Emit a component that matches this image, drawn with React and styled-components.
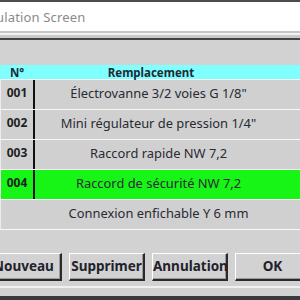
import React from "react";
import styled, { createGlobalStyle } from "styled-components";

const Global = createGlobalStyle`
  html, body { margin: 0; padding: 0; width: 300px; height: 300px; overflow: hidden; background: #d2d2d2; }
  * { box-sizing: border-box; }
`;

const Window = styled.div`
  width: 300px;
  height: 300px;
  display: flex;
  flex-direction: column;
  background: #d2d2d2;
  border-top: 2px solid #4c4c4c;
  border-bottom: 4px solid #3a3a3a;
  font-family: "Noto Sans", "Open Sans", sans-serif;
  overflow: hidden;
`;

const TitleBar = styled.div`
  height: 29px;
  flex: none;
  background: #ffffff;
  display: flex;
  align-items: center;
  white-space: nowrap;
`;

const Title = styled.span`
  margin-left: -27px;
  font-size: 13px;
  color: #8a8a8a;
  letter-spacing: 0.15px;
`;

const Frame = styled.div`
  flex: none;
  height: 9px;
  border-top: 2px solid #c6c6c6;
  border-bottom: 2px solid #444;
  background: linear-gradient(#f2f2f2 0 2px, #c9c9c9 2px);
`;

const Body = styled.div`
  flex: 1;
  display: flex;
  flex-direction: column;
  padding-top: 25px;
`;

const HeaderRow = styled.div`
  height: 15px;
  display: grid;
  grid-template-columns: 34px 1fr;
  background: #80ffff;
  border-bottom: 1px solid #f4f4f4;
  font-size: 11.5px;
  font-weight: 700;
  color: #1e2a36;
  align-items: center;
`;

const HeadCell = styled.div`
  text-align: center;
  padding-right: ${p => p.$pr || 0}px;
  line-height: 15px;
`;

const Row = styled.div`
  height: 30px;
  display: grid;
  grid-template-columns: 34px 1fr;
  background: ${p => (p.$active ? "#16f516" : "#d0d0d0")};
  border-bottom: 1px solid #f8f8f8;
  border-left: 1px solid #ececec;
  align-items: stretch;
`;

const NumCell = styled.div`
  display: flex;
  align-items: center;
  justify-content: center;
  font-size: 12px;
  font-weight: 700;
  color: #1f1f1f;
  border-right: ${p => (p.$line ? "2px solid #111" : "none")};
  padding-bottom: 5px;
`;

const TextCell = styled.div`
  display: flex;
  align-items: center;
  justify-content: center;
  padding-right: 18px;
  padding-bottom: 3px;
  font-size: 12.9px;
  color: #2a2a34;
  white-space: nowrap;
`;

const ButtonBar = styled.div`
  margin-top: 23px;
  display: flex;
  gap: 7px;
  margin-left: -14px;
`;

const Button = styled.button`
  flex: none;
  width: 76px;
  height: 28px;
  background: #d2d2d2;
  border: none;
  border-top: 1px solid #ffffff;
  border-left: 1px solid #ffffff;
  border-right: 2px solid #2a2a2a;
  border-bottom: 2px solid #2a2a2a;
  box-shadow: inset -1px -1px 0 #9a9a9a;
  font-family: "Noto Sans", "Open Sans", sans-serif;
  font-size: 13.5px;
  font-weight: 700;
  color: #22222c;
  padding: 0 0 2px;
`;

const BottomFrame = styled.div`
  margin-top: 5px;
  border-top: 2px solid #f0f0f0;
  flex: 1;
`;

const rows = [
  { n: "001", t: "Électrovanne 3/2 voies G 1/8\"" },
  { n: "002", t: "Mini régulateur de pression 1/4\"" },
  { n: "003", t: "Raccord rapide NW 7,2" },
  { n: "004", t: "Raccord de sécurité NW 7,2", active: true },
  { n: "", t: "Connexion enfichable Y 6 mm", noLine: true },
];

export default function App() {
  return (
    <>
      <Global />
      <Window>
        <TitleBar>
          <Title>Simulation Screen</Title>
        </TitleBar>
        <Frame />
        <Body>
          <HeaderRow>
            <HeadCell>N°</HeadCell>
            <HeadCell $pr={32}>Remplacement</HeadCell>
          </HeaderRow>
          {rows.map((r, i) => (
            <Row key={i} $active={r.active}>
              <NumCell $line={!r.noLine}>{r.n}</NumCell>
              <TextCell>{r.t}</TextCell>
            </Row>
          ))}
          <ButtonBar>
            <Button>Nouveau</Button>
            <Button>Supprimer</Button>
            <Button>Annulation</Button>
            <Button>OK</Button>
          </ButtonBar>
          <BottomFrame />
        </Body>
      </Window>
    </>
  );
}
